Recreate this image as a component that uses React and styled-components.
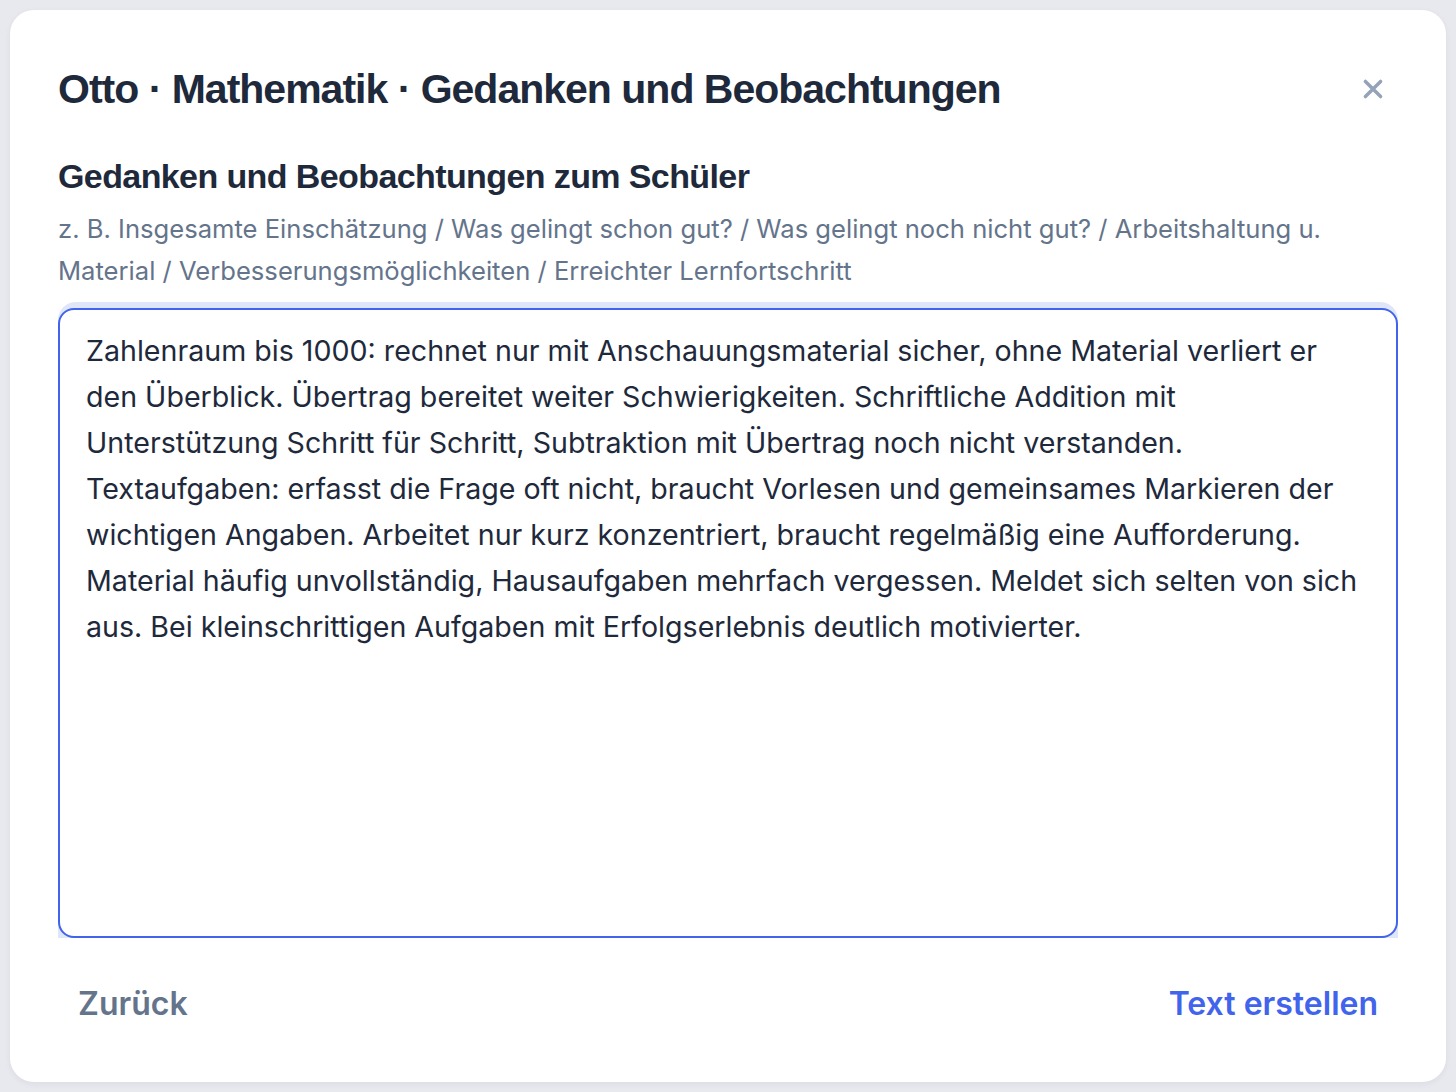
import styled, { createGlobalStyle } from 'styled-components';

const GlobalStyle = createGlobalStyle`
  html, body {
    margin: 0;
    padding: 0;
    background: #e8e9ef;
  }
  * { box-sizing: border-box; }
`;

const Page = styled.div`
  padding: 10px;
  height: 1092px;
`;

const Card = styled.div`
  background: #fff;
  border-radius: 24px;
  height: 1072px;
  padding: 48px 48px 0 48px;
  box-shadow: 0 2px 6px rgba(30, 41, 59, 0.06);
  display: flex;
  flex-direction: column;
`;

const Header = styled.div`
  display: flex;
  align-items: center;
  justify-content: space-between;
  height: 62px;
`;

const Title = styled.h1`
  margin: 0;
  font-family: "Liberation Sans", Arial, sans-serif;
  font-weight: 700;
  font-size: 41px;
  letter-spacing: -1px;
  color: #1e293b;
`;

const CloseButton = styled.button`
  border: none;
  background: none;
  padding: 0;
  margin-right: 10px;
  width: 30px;
  height: 30px;
  display: flex;
  align-items: center;
  justify-content: center;
  color: #94a3b8;
  cursor: pointer;
`;

const Section = styled.h2`
  margin: 37px 0 0 0;
  font-family: "Liberation Sans", Arial, sans-serif;
  font-weight: 700;
  font-size: 34px;
  letter-spacing: -0.6px;
  color: #1e293b;
`;

const Hint = styled.p`
  margin: 12px 0 0 0;
  font-family: Inter, "Noto Sans", sans-serif;
  font-size: 25.6px;
  line-height: 42px;
  color: #64748b;
`;

const Ring = styled.div`
  margin-top: 10px;
  padding-top: 6px;
  background: #e0e6fa;
  border-radius: 18px 18px 0 0;
`;

const TextArea = styled.textarea`
  display: block;
  width: 100%;
  height: 630px;
  resize: none;
  border: 2px solid #4263eb;
  border-radius: 16px;
  background: #fff;
  padding: 18px 26px;
  font-family: Inter, "Noto Sans", sans-serif;
  font-size: 28.6px;
  line-height: 46px;
  color: #1e293b;
  outline: none;
`;

const Footer = styled.div`
  display: flex;
  justify-content: space-between;
  align-items: center;
  margin-top: 36px;
`;

const FooterButton = styled.button`
  border: none;
  background: none;
  padding: 10px 20px;
  font-family: Inter, "Noto Sans", sans-serif;
  font-weight: 600;
  font-size: 32px;
  color: ${(p) => (p.$primary ? '#4263eb' : '#64748b')};
  cursor: pointer;
`;

const text =
  'Zahlenraum bis 1000: rechnet nur mit Anschauungsmaterial sicher, ohne Material verliert er den Überblick. Übertrag bereitet weiter Schwierigkeiten. Schriftliche Addition mit Unterstützung Schritt für Schritt, Subtraktion mit Übertrag noch nicht verstanden. Textaufgaben: erfasst die Frage oft nicht, braucht Vorlesen und gemeinsames Markieren der wichtigen Angaben. Arbeitet nur kurz konzentriert, braucht regelmäßig eine Aufforderung. Material häufig unvollständig, Hausaufgaben mehrfach vergessen. Meldet sich selten von sich aus. Bei kleinschrittigen Aufgaben mit Erfolgserlebnis deutlich motivierter.';

export default function App() {
  return (
    <>
      <GlobalStyle />
      <Page>
        <Card>
          <Header>
            <Title>Otto · Mathematik · Gedanken und Beobachtungen</Title>
            <CloseButton aria-label="Schließen">
              <svg width="26" height="26" viewBox="0 0 24 24" fill="none" stroke="currentColor" strokeWidth="3.2" strokeLinecap="round">
                <path d="M5 5l14 14M19 5L5 19" />
              </svg>
            </CloseButton>
          </Header>
          <Section>Gedanken und Beobachtungen zum Schüler</Section>
          <Hint>
            z. B. Insgesamte Einschätzung / Was gelingt schon gut? / Was gelingt noch nicht gut? / Arbeitshaltung u. Material / Verbesserungsmöglichkeiten / Erreichter Lernfortschritt
          </Hint>
          <Ring>
            <TextArea defaultValue={text} />
          </Ring>
          <Footer>
            <FooterButton>Zurück</FooterButton>
            <FooterButton $primary>Text erstellen</FooterButton>
          </Footer>
        </Card>
      </Page>
    </>
  );
}
